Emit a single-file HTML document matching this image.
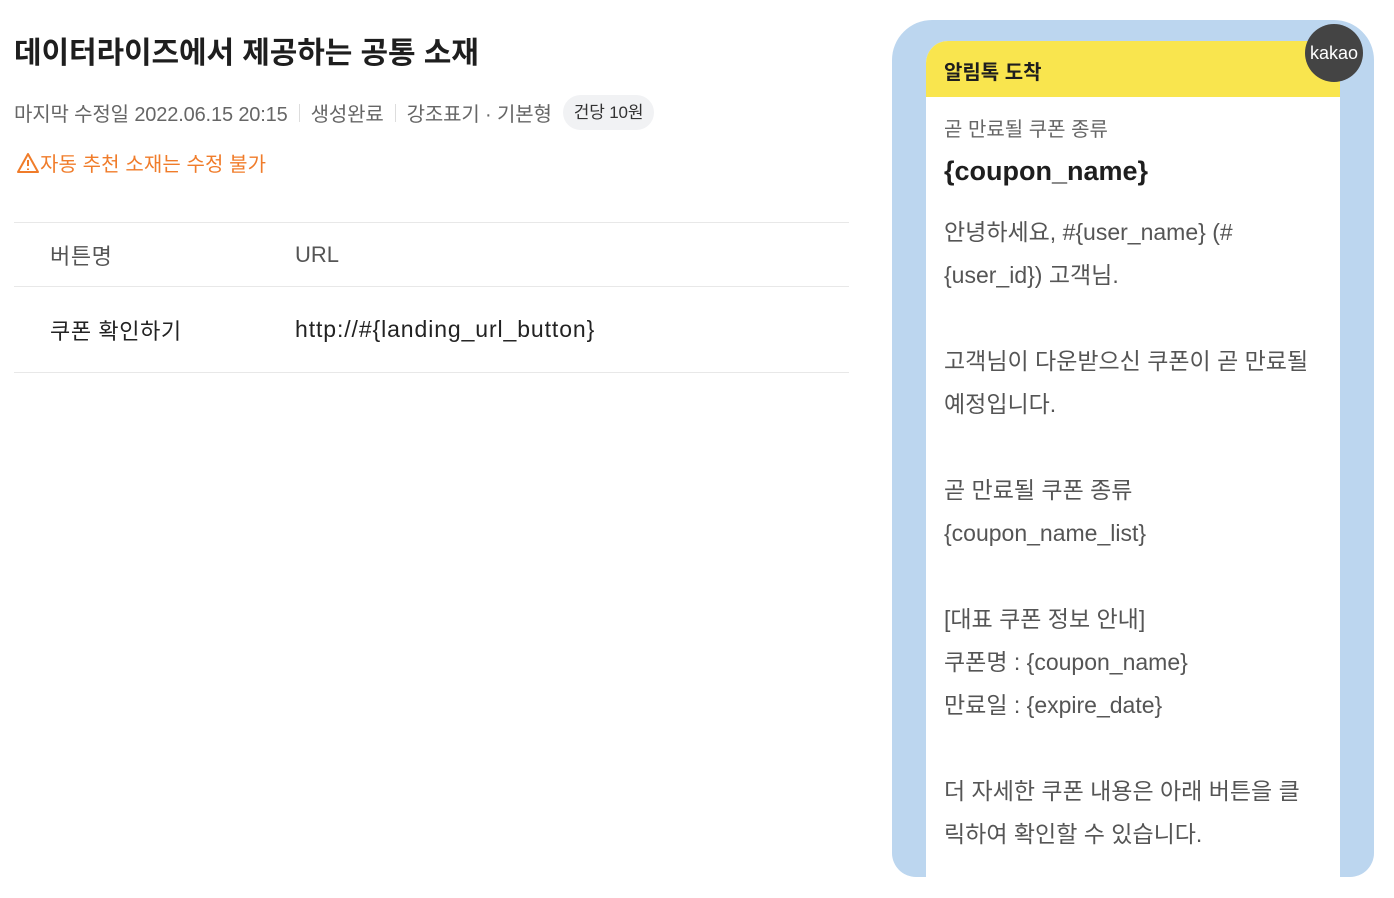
<!DOCTYPE html>
<html><head><meta charset="utf-8"><style>
*{margin:0;padding:0;box-sizing:border-box}
body{width:1394px;height:898px;background:#fff;font-family:"Liberation Sans","Noto Sans CJK KR",sans-serif;position:relative;overflow:hidden;color:#222}
.t{position:absolute;left:14px;top:28px;font-size:30px;font-weight:700;color:#1e1e1e;letter-spacing:-0.1px}
.meta{position:absolute;left:14px;top:95px;font-size:20px;color:#666;display:flex;align-items:center;letter-spacing:-0.15px}
.sep{display:inline-block;width:1px;height:18px;background:#ddd;margin:0 11px}
.badge{background:#f1f2f4;border-radius:18px;padding:0 11px;height:35px;line-height:35px;font-size:17px;color:#333;margin-left:11px}
.warn{position:absolute;left:16px;top:148px;font-size:20px;color:#f07c2a;letter-spacing:0.1px;display:flex;align-items:center}
.tbl{position:absolute;left:14px;top:222px;width:835px;border-top:1px solid #e8e8e8}
.row{display:flex;align-items:center;border-bottom:1px solid #e8e8e8;font-size:22px}
.row div:first-child{width:281px;padding-left:36px;letter-spacing:0.6px}
.panel{position:absolute;left:892px;top:20px;width:482px;height:857px;background:#bcd6ef;border-radius:40px 40px 24px 24px;overflow:hidden}
.card{position:absolute;left:34px;top:21px;width:414px;height:900px;background:#fff;border-radius:22px 0 0 0;overflow:hidden}
.hd{height:56px;background:#f9e54e;padding:15px 0 0 18px;font-size:20px;font-weight:700;color:#1e1e1e}
.bd{padding:20px 18px;color:#555;font-size:23px;line-height:43px;letter-spacing:0px}
.kakao{position:absolute;left:1305px;top:24px;width:58px;height:58px;border-radius:50%;background:#444;color:#fff;font-size:18px;text-align:center;line-height:58px}
</style></head><body>
<div class="t">데이터라이즈에서 제공하는 공통 소재</div>
<div class="meta">마지막 수정일 2022.06.15 20:15<span class="sep"></span>생성완료<span class="sep"></span>강조표기 · 기본형<span class="badge">건당 10원</span></div>
<div class="warn"><svg width="24" height="22" viewBox="0 0 24 22"><path d="M12 2L22 20H2Z" fill="none" stroke="#f07c2a" stroke-width="2" stroke-linejoin="round"/><path d="M12 8v6M12 16.5v1.5" stroke="#f07c2a" stroke-width="2"/></svg>자동 추천 소재는 수정 불가</div>
<div class="tbl">
<div class="row" style="height:64px;color:#555"><div>버튼명</div><div>URL</div></div>
<div class="row" style="height:86px;color:#222"><div>쿠폰 확인하기</div><div style="font-size:23px;letter-spacing:0.9px">http://#{landing_url_button}</div></div>
</div>
<div class="panel"><div class="card">
<div class="hd">알림톡 도착</div>
<div class="bd">
<div style="font-size:20px;line-height:26px;color:#666">곧 만료될 쿠폰 종류</div>
<div style="font-size:27px;font-weight:700;color:#1e1e1e;line-height:36px;margin-top:10px">{coupon_name}</div>
<div style="margin-top:22px">안녕하세요, #{user_name} (#<br>{user_id}) 고객님.<br><br>고객님이 다운받으신 쿠폰이 곧 만료될<br>예정입니다.<br><br>곧 만료될 쿠폰 종류<br>{coupon_name_list}<br><br>[대표 쿠폰 정보 안내]<br>쿠폰명 : {coupon_name}<br>만료일 : {expire_date}<br><br>더 자세한 쿠폰 내용은 아래 버튼을 클<br>릭하여 확인할 수 있습니다.</div>
</div></div></div>
<div class="kakao">kakao</div>
</body></html>
